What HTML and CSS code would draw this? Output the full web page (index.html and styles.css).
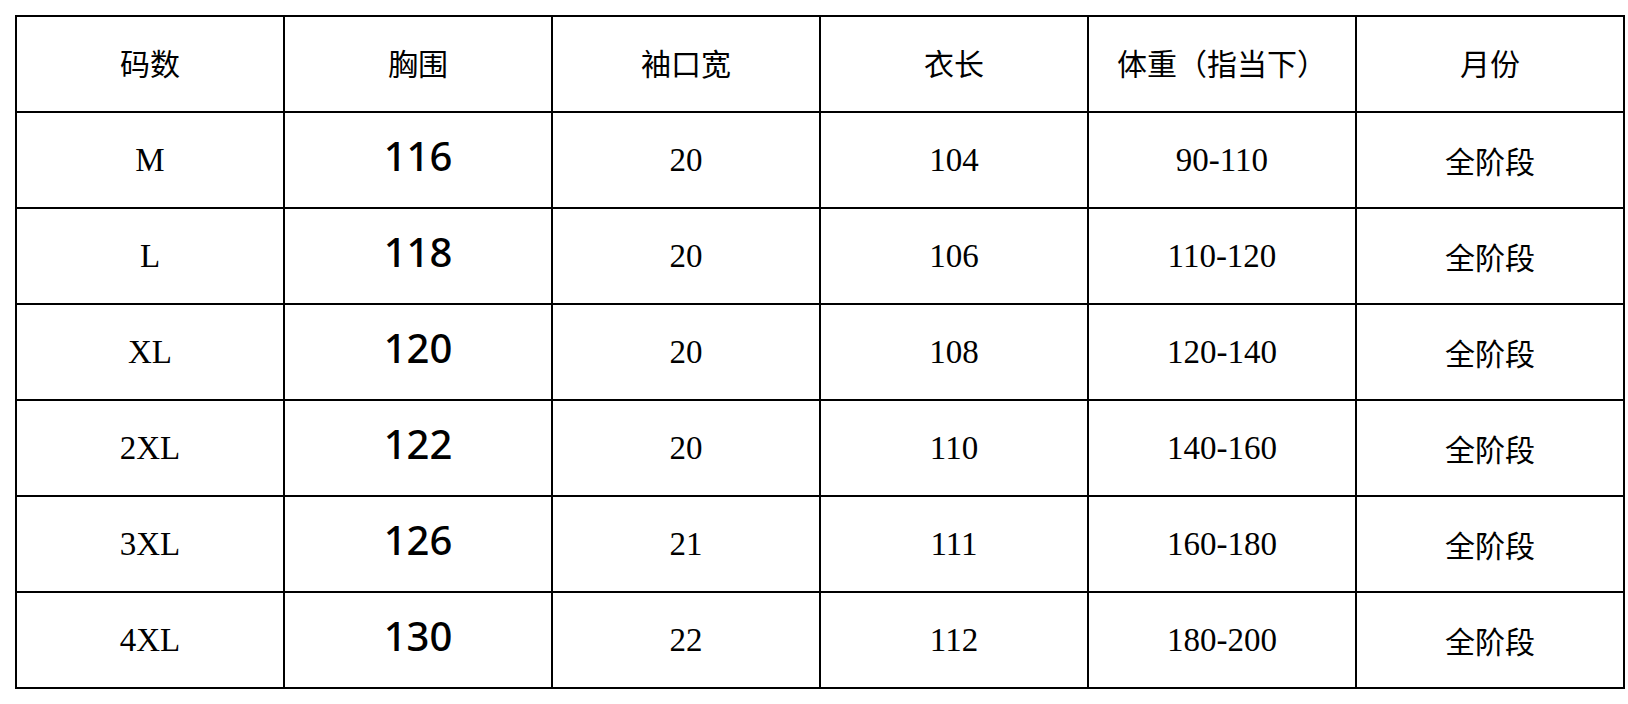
FILE: index.html
```html
<!DOCTYPE html>
<html lang="zh-CN">
<head>
<meta charset="utf-8">
<title>尺码表</title>
<link rel="stylesheet" href="styles.css">
</head>
<body>
<div class="sheet">
<table class="size-table">
  <thead>
    <tr>
      <th>码数</th><th>胸围</th><th>袖口宽</th><th>衣长</th><th>体重（指当下）</th><th>月份</th>
    </tr>
  </thead>
  <tbody>
    <tr><td>M</td><td class="num">116</td><td>20</td><td>104</td><td>90-110</td><td class="cn">全阶段</td></tr>
    <tr><td>L</td><td class="num">118</td><td>20</td><td>106</td><td>110-120</td><td class="cn">全阶段</td></tr>
    <tr><td>XL</td><td class="num">120</td><td>20</td><td>108</td><td>120-140</td><td class="cn">全阶段</td></tr>
    <tr><td>2XL</td><td class="num">122</td><td>20</td><td>110</td><td>140-160</td><td class="cn">全阶段</td></tr>
    <tr><td>3XL</td><td class="num">126</td><td>21</td><td>111</td><td>160-180</td><td class="cn">全阶段</td></tr>
    <tr><td>4XL</td><td class="num">130</td><td>22</td><td>112</td><td>180-200</td><td class="cn">全阶段</td></tr>
  </tbody>
</table>
</div>
</body>
</html>
```
FILE: styles.css
```css
html, body {
  margin: 0;
  padding: 0;
  background: #fff;
}

.sheet {
  padding: 15px 0 0 15px;
}

.size-table {
  border-collapse: collapse;
  table-layout: fixed;
  width: 1598px;
  color: #000;
  font-family: "Liberation Serif", "Noto Sans CJK SC", serif;
  font-size: 33px;
}

.size-table tr {
  height: 96px;
}

.size-table th,
.size-table td {
  border: 2px solid #000;
  width: 266px;
  padding: 0;
  text-align: center;
  vertical-align: middle;
  font-weight: normal;
  line-height: 1;
}

.size-table th {
  font-family: "Noto Sans CJK SC", sans-serif;
  font-size: 30px;
  padding-bottom: 4px;
}

.size-table td.cn {
  font-family: "Noto Sans CJK SC", sans-serif;
  font-size: 30px;
}

.size-table td.num {
  font-family: "Noto Sans", "Open Sans", sans-serif;
  font-size: 40px;
  font-weight: 500;
  padding-bottom: 8px;
}
```
